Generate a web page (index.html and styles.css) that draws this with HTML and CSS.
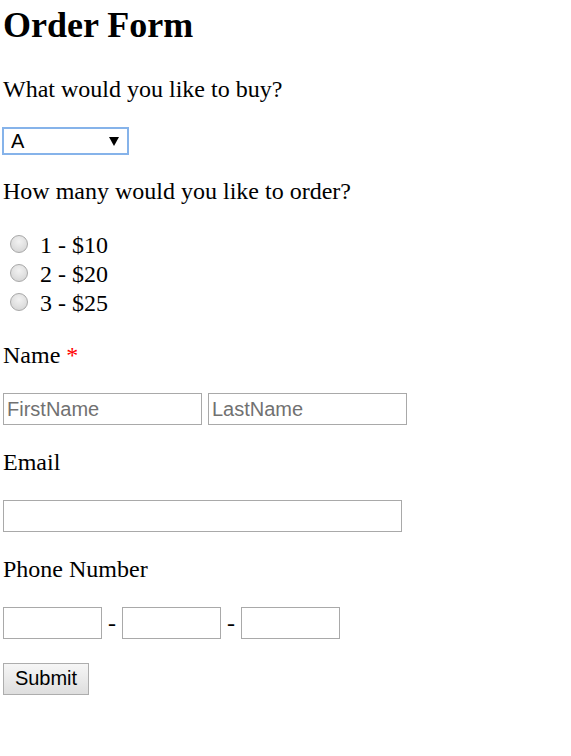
FILE: index.html
```html
<!DOCTYPE html>
<html lang="en">
<head>
<meta charset="utf-8">
<title>Order Form</title>
<link rel="stylesheet" href="styles.css">
</head>
<body>
<form class="order" onsubmit="return false">
  <h1 class="title">Order Form</h1>

  <p class="label label-q1">What would you like to buy?</p>
  <div class="field field-select">
    <div class="select-wrap">
      <select class="select" name="item">
        <option>A</option>
        <option>B</option>
        <option>C</option>
      </select>
      <svg class="select-arrow" width="10" height="9" viewBox="0 0 10 9" aria-hidden="true"><path d="M0 0H10L5 9Z" fill="#000"/></svg>
    </div>
  </div>

  <p class="label label-q2">How many would you like to order?</p>
  <div class="radios">
    <label class="radio-row"><input class="radio" type="radio" name="qty" value="1"><span>1 - $10</span></label>
    <label class="radio-row"><input class="radio" type="radio" name="qty" value="2"><span>2 - $20</span></label>
    <label class="radio-row"><input class="radio" type="radio" name="qty" value="3"><span>3 - $25</span></label>
  </div>

  <p class="label label-name">Name <span class="req">*</span></p>
  <div class="field field-name">
    <input class="text text-half" type="text" placeholder="FirstName">
    <input class="text text-half" type="text" placeholder="LastName">
  </div>

  <p class="label label-email">Email</p>
  <div class="field field-email">
    <input class="text text-wide" type="text">
  </div>

  <p class="label label-phone">Phone Number</p>
  <div class="field field-phone">
    <input class="text text-phone" type="text"><span class="dash">-</span><input class="text text-phone" type="text"><span class="dash">-</span><input class="text text-phone" type="text">
  </div>

  <div class="field field-submit">
    <button class="submit" type="submit">Submit</button>
  </div>
</form>
</body>
</html>
```

FILE: styles.css
```css
html, body {
  margin: 0;
  padding: 0;
  background: #ffffff;
}

body {
  font-family: "Liberation Serif", "Times New Roman", serif;
  font-size: 24px;
  color: #000000;
}

.order {
  display: flex;
  flex-direction: column;
  align-items: flex-start;
  padding: 0 3px;
}

.title {
  margin: 5px 0 0 0;
  font-size: 36px;
  font-weight: bold;
  line-height: 40px;
  height: 40px;
}

.label {
  margin: 0;
  line-height: 28px;
  height: 28px;
}

.label-q1 { margin-top: 30px; }
.label-q2 { margin-top: 22px; }
.label-name { margin-top: 23px; }
.label-email { margin-top: 23px; }
.label-phone { margin-top: 23px; }

.req {
  color: #ff0000;
}

.field {
  display: flex;
  align-items: center;
  margin-top: 24px;
}

.field-phone { margin-top: 24px; }

/* select */
.select-wrap {
  position: relative;
  display: flex;
  margin-left: -1px;
}

.select {
  appearance: none;
  -webkit-appearance: none;
  box-sizing: border-box;
  width: 127px;
  height: 28px;
  margin: 0;
  padding: 0 0 0 7px;
  border: 2px solid #86b3ea;
  border-radius: 0;
  background: #ffffff;
  font-family: "Liberation Sans", Arial, sans-serif;
  font-size: 20px;
  color: #000000;
  outline: none;
}

.select-arrow {
  position: absolute;
  right: 10px;
  top: 10px;
  pointer-events: none;
}

/* radios */
.radios {
  display: flex;
  flex-direction: column;
  margin-top: 26px;
}

.radio-row {
  display: flex;
  align-items: center;
  height: 29px;
  line-height: 29px;
}

.radio {
  appearance: none;
  -webkit-appearance: none;
  box-sizing: border-box;
  width: 18px;
  height: 18px;
  margin: 0 12px 3px 7px;
  border: 1px solid #a8a8a8;
  border-radius: 50%;
  background: radial-gradient(circle at 50% 35%, #f2f2f2 0%, #e0e0e0 55%, #cfcfcf 100%);
}

/* text inputs */
.text {
  box-sizing: border-box;
  height: 32px;
  margin: 0;
  padding: 0 3px;
  border: 1px solid #a9a9a9;
  border-radius: 0;
  background: #ffffff;
  font-family: "Liberation Sans", Arial, sans-serif;
  font-size: 20px;
  color: #000000;
  outline: none;
}

.text::placeholder {
  color: #717171;
  opacity: 1;
}

.field-name {
  gap: 6px;
}

.text-half { width: 199px; }
.text-wide { width: 399px; }
.text-phone { width: 99px; }

.dash {
  width: 20px;
  text-align: center;
  font-size: 24px;
  line-height: 32px;
}

/* submit */
.submit {
  box-sizing: border-box;
  width: 86px;
  height: 32px;
  margin: 0;
  padding: 0 0 1px;
  border: 1px solid #adadad;
  border-radius: 0;
  background: linear-gradient(#f6f6f6, #dedede);
  font-family: "Liberation Sans", Arial, sans-serif;
  font-size: 20px;
  color: #000000;
}
```
